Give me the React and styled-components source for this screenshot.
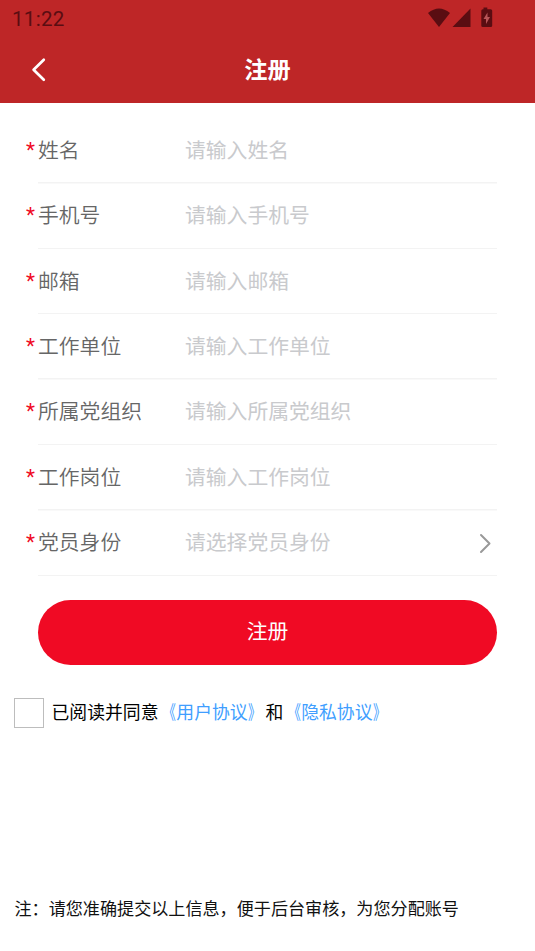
import React from "react";
import styled, { createGlobalStyle } from "styled-components";

const GlobalStyle = createGlobalStyle`
  * { box-sizing: border-box; }
  body {
    margin: 0;
    background: #fff;
    font-family: Roboto, "Noto Sans CJK SC", sans-serif;
  }
`;

const Screen = styled.div`
  display: flex;
  flex-direction: column;
  height: 951px;
  overflow: hidden;
  background: #fff;
`;

const Header = styled.header`
  height: 103px;
  flex: none;
  background: #be2627;
`;

const StatusBar = styled.div`
  display: flex;
  justify-content: space-between;
  height: 37px;
  padding: 0 40px 0 12px;
  color: #5a0d12;
`;

const Clock = styled.span`
  font-size: 20.5px;
  line-height: 38px;
  letter-spacing: 0.3px;
`;

const StatusIcons = styled.svg`
  width: 68px;
  height: 37px;
`;

const NavBar = styled.div`
  display: grid;
  grid-template-columns: 78px 1fr 78px;
  align-items: center;
  height: 66px;
`;

const BackButton = styled.button`
  display: flex;
  width: 78px;
  height: 66px;
  padding: 0;
  border: 0;
  background: none;
`;

const Title = styled.h1`
  margin: 0;
  padding-bottom: 4px;
  color: #fff;
  font-family: "Noto Sans CJK SC", sans-serif;
  font-size: 23.2px;
  font-weight: 700;
  line-height: 62px;
  text-align: center;
`;

const Form = styled.form`
  display: flex;
  flex-direction: column;
  padding: 15.3px 38px 0;
`;

const Field = styled.div`
  display: flex;
  align-items: center;
  height: 65.4px;
  margin-left: -12px;
  padding: 0 0 4.4px 12px;
  background: linear-gradient(#f3f3f3, #f3f3f3) 12px 100% / 100% 1.5px no-repeat;
  font-family: "Noto Sans CJK SC", sans-serif;
  font-size: 20.8px;
  line-height: 30px;
`;

const Required = styled.span`
  width: 12px;
  height: 28px;
  margin-left: -12px;
  color: #ef0a24;
  font-family: Roboto, sans-serif;
`;

const Label = styled.label`
  width: 147px;
  color: #666;
  font-weight: 350;
`;

const Placeholder = styled.span`
  flex: 1;
  color: #c9cacd;
  font-weight: 400;
`;

const Chevron = styled.svg`
  width: 14px;
  height: 22px;
  margin: 3px 5px 0 0;
`;

const SubmitButton = styled.button`
  height: 65.5px;
  margin-top: 23.9px;
  padding: 0 0 5px;
  border: 0;
  border-radius: 33px;
  background: #f00a24;
  color: #fff;
  font-family: "Noto Sans CJK SC", sans-serif;
  font-size: 20.8px;
`;

const Agreement = styled.div`
  display: flex;
  align-items: center;
  height: 30px;
  margin: 32.5px 0 0 14px;
  color: #000;
  font-family: "Noto Sans CJK SC", sans-serif;
  font-size: 17.84px;
  line-height: 26px;
  white-space: nowrap;
`;

const Terms = styled.span`
  padding-bottom: 3.5px;
`;

const Checkbox = styled.span`
  width: 30px;
  height: 30px;
  margin-right: 7.5px;
  border: 1.5px solid #bdbdbd;
`;

const PolicyLink = styled.a`
  color: #409eff;
`;

const Bracket = styled.span`
  display: inline-block;
  transform: scale(0.72, 1.08);
  transform-origin: ${({ $side }) => $side} center;
`;

const Note = styled.p`
  margin: auto 0 30px 14.5px;
  color: #111;
  font-family: "Noto Sans CJK SC", sans-serif;
  font-size: 17.1px;
  line-height: 26px;
  white-space: nowrap;
`;

const fields = [
  { label: "姓名", hint: "请输入姓名" },
  { label: "手机号", hint: "请输入手机号" },
  { label: "邮箱", hint: "请输入邮箱" },
  { label: "工作单位", hint: "请输入工作单位" },
  { label: "所属党组织", hint: "请输入所属党组织" },
  { label: "工作岗位", hint: "请输入工作岗位" },
  { label: "党员身份", hint: "请选择党员身份", picker: true },
];

function Policy({ name }) {
  return (
    <PolicyLink>
      <Bracket $side="right">《</Bracket>
      {name}
      <Bracket $side="left">》</Bracket>
    </PolicyLink>
  );
}

export default function App() {
  return (
    <>
      <GlobalStyle />
      <Screen>
        <Header>
          <StatusBar>
            <Clock>11:22</Clock>
            <StatusIcons viewBox="0 0 68 37" fill="#5a0d12">
              <path d="M1 13 Q12 4 23 13 L12 27 Z" />
              <path d="M43.500 8.500 V27 H25.500 Z" />
              <path d="M56.500 7.500 h3.800 v1.700 h3.400 q1.500 0 1.500 1.500 v15 q0 1.300 -1.500 1.300 h-7.900 q-1.500 0 -1.500 -1.300 v-15 q0 -1.500 1.500 -1.500 h.7z" />
              <path d="M60.500 12.500 L56.500 19 H59 V24 L63 17 H60.500Z" fill="#b85558" />
            </StatusIcons>
          </StatusBar>
          <NavBar>
            <BackButton type="button" aria-label="返回">
              <svg width="78" height="66" fill="none" stroke="#fff" strokeWidth="2.7" strokeLinecap="round" strokeLinejoin="round">
                <path d="M43.800 22.800 L33.600 32.800 L43.800 42.800" />
              </svg>
            </BackButton>
            <Title>注册</Title>
          </NavBar>
        </Header>
        <Form>
          {fields.map(({ label, hint, picker }) => (
            <Field key={label}>
              <Required>*</Required>
              <Label>{label}</Label>
              <Placeholder>{hint}</Placeholder>
              {picker && (
                <Chevron viewBox="0 0 14 22" fill="none" stroke="#999" strokeWidth="2" strokeLinecap="round" strokeLinejoin="round">
                  <path d="M3 3 L11.500 11.500 L3 20" />
                </Chevron>
              )}
            </Field>
          ))}
          <SubmitButton type="button">注册</SubmitButton>
        </Form>
        <Agreement>
          <Checkbox role="checkbox" aria-checked="false" />
          <Terms>
            已阅读并同意
            <Policy name="用户协议" />
            和
            <Policy name="隐私协议" />
          </Terms>
        </Agreement>
        <Note>注：请您准确提交以上信息，便于后台审核，为您分配账号</Note>
      </Screen>
    </>
  );
}
